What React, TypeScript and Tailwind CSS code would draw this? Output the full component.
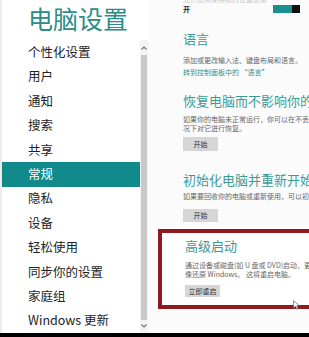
import React from "react";

const items = [
  "个性化设置",
  "用户",
  "通知",
  "搜索",
  "共享",
  "常规",
  "隐私",
  "设备",
  "轻松使用",
  "同步你的设置",
  "家庭组",
  "Windows 更新",
];

const font = { fontFamily: '"Noto Sans CJK SC", "Noto Sans", sans-serif' };

export default function App() {
  return (
    <div className="w-[309px] h-[337px] flex flex-col bg-white overflow-hidden relative" style={font}>
      <div className="flex flex-1 min-h-0">
        {/* left panel */}
        <div className="w-[148px] flex flex-col bg-white border-l-[2px] border-[#ececec]">
          <div className="h-[40px] pt-[3px] pl-[26px] text-[25px] leading-[30px] text-[#2a8d87] whitespace-nowrap">
            电脑设置
          </div>
          <div className="flex flex-1 min-h-0">
            <div className="w-[138px] flex flex-col">
              {items.map((t) =>
                t === "常规" ? (
                  <div key={t} className="h-[25px] flex items-center pl-[26px] text-[12.5px] bg-[#108a8a] text-white whitespace-nowrap">
                    {t}
                  </div>
                ) : (
                  <div key={t} className="h-[25px] flex items-center pl-[26px] text-[12.5px] text-[#222] whitespace-nowrap">
                    {t}
                  </div>
                )
              )}
            </div>
            <div className="w-[8px] bg-[#f3f3f3] flex flex-col items-center">
              <div className="h-[15px] flex items-center justify-center">
                <svg width="6" height="4" viewBox="0 0 6 4">
                  <path d="M0.5 3.5 L3 1 L5.5 3.5" stroke="#777" strokeWidth="1.2" fill="none" />
                </svg>
              </div>
              <div className="w-[6px] h-[265px] bg-[#c9c9c9]" />
              <div className="h-[12px] flex items-center justify-center">
                <svg width="6" height="4" viewBox="0 0 6 4">
                  <path d="M0.5 0.5 L3 3 L5.5 0.5" stroke="#777" strokeWidth="1.2" fill="none" />
                </svg>
              </div>
            </div>
          </div>
        </div>
        {/* right panel */}
        <div className="flex-1 min-w-0 bg-[#fbfbfb] overflow-hidden flex flex-col pl-[35px]">
          <div className="h-[4px] overflow-hidden">
            <div className="-mt-[5px] text-[7px] leading-[9px] text-[#c8c8c8] whitespace-nowrap">允许应用使用我的位置信息</div>
          </div>
          <div className="h-[10px] flex items-center">
            <span className="text-[7px] font-bold text-[#222]">开</span>
            <div className="ml-auto mr-[9px] flex h-[8px]">
              <div className="w-[19px] bg-[#1a8f8c]" />
              <div className="w-[8px] bg-[#111]" />
            </div>
          </div>
          <div className="mt-[17px] text-[13px] leading-[16px] text-[#3a9b97] whitespace-nowrap">语言</div>
          <div className="mt-[7px] text-[7px] leading-[12px] text-[#666] whitespace-nowrap">添加或更改输入法、键盘布局和语言。</div>
          <div className="text-[7px] leading-[12px] text-[#2d9390] whitespace-nowrap">转到控制面板中的 “语言”</div>
          <div className="mt-[15px] text-[13px] leading-[16px] text-[#3a9b97] whitespace-nowrap">恢复电脑而不影响你的文件</div>
          <div className="mt-[6px] text-[7px] leading-[9px] text-[#666] whitespace-nowrap">如果你的电脑未正常运行，你可以在不丢失文件的情</div>
          <div className="text-[7px] leading-[9px] text-[#666] whitespace-nowrap">况下对它进行恢复。</div>
          <div className="mt-[4px] w-[35px] h-[14px] bg-[#d6d6d6] flex items-center justify-center text-[7px] text-[#333]">开始</div>
          <div className="mt-[21px] text-[13px] leading-[16px] text-[#3a9b97] whitespace-nowrap">初始化电脑并重新开始</div>
          <div className="mt-[4px] text-[7px] leading-[9px] text-[#666] whitespace-nowrap">如果要回收你的电脑或重新使用，可以初始化电脑。</div>
          <div className="mt-[8px] w-[35px] h-[13px] bg-[#d6d6d6] flex items-center justify-center text-[7px] text-[#333]">开始</div>
          <div className="mt-[7px] -ml-[25px] w-[170px] border-[4px] border-[#8c1a1e] pl-[23px] pt-[5px] pb-[8px] bg-white">
            <div className="text-[13px] leading-[16px] text-[#3a9b97] whitespace-nowrap">高级启动</div>
            <div className="mt-[7px] text-[7px] leading-[9px] text-[#666] whitespace-nowrap">通过设备或磁盘(如 U 盘或 DVD)启动，更改电</div>
            <div className="text-[7px] leading-[9px] text-[#666] whitespace-nowrap">像还原 Windows。 这将重启电脑。</div>
            <div className="mt-[6px] w-[35px] h-[12px] bg-[#d6d6d6] flex items-center justify-center text-[7px] text-[#333]">立即重启</div>
          </div>
        </div>
      </div>
      <div className="h-[4px] bg-black" />
      <svg className="absolute left-[293px] top-[300px]" width="7" height="10" viewBox="0 0 7 10">
        <path d="M0.5 0.5 L0.5 8 L2.5 6.2 L4 9.3 L5.2 8.7 L3.8 5.7 L6.3 5.7 Z" fill="#fff" stroke="#666" strokeWidth="0.7" />
      </svg>
    </div>
  );
}
